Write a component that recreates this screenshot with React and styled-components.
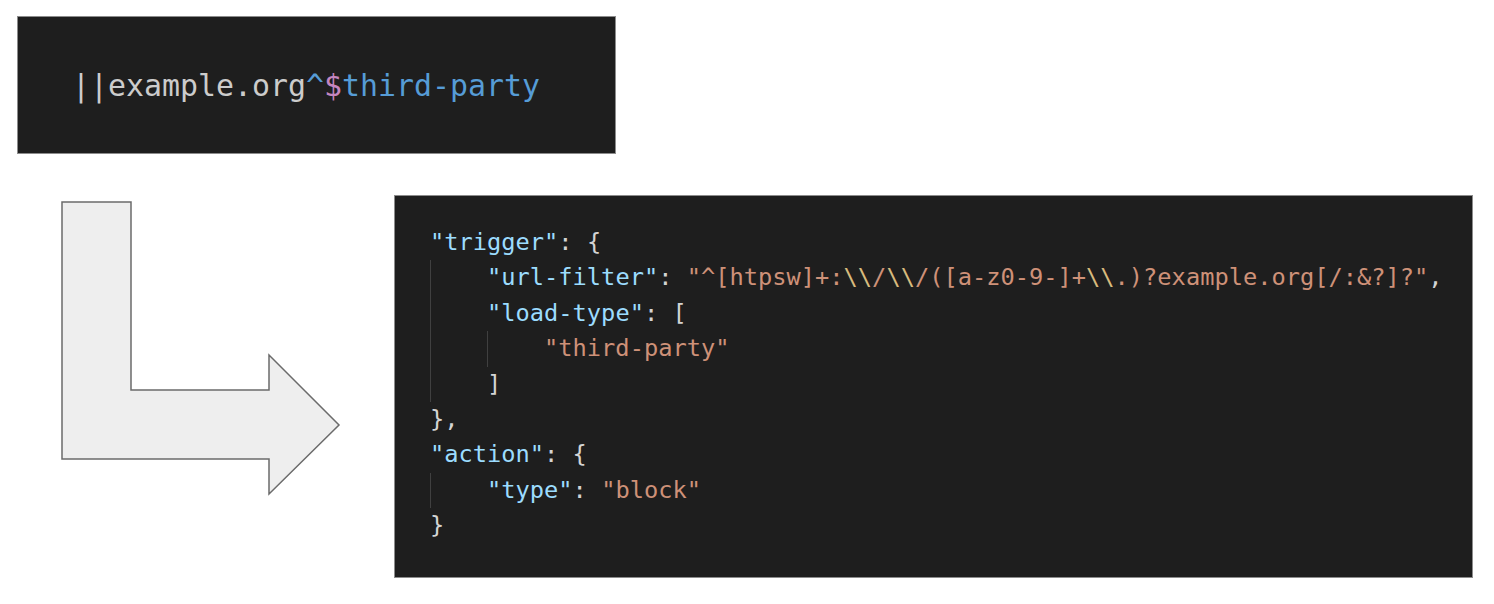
import React from 'react'
import styled, { createGlobalStyle } from 'styled-components'

// Styles ==================================
const Global = createGlobalStyle`
  html, body {
    margin: 0;
    padding: 0;
    background: #fff;
  }
`

const Page = styled.div`
  width: 1494px;
  height: 604px;
  padding: 16px 0 0 17px;
  box-sizing: border-box;
  display: flex;
  flex-direction: column;
`

const Rule = styled.div`
  width: 599px;
  height: 138px;
  box-sizing: border-box;
  background: #1e1e1e;
  border: 1px solid #8c8c8c;
  display: flex;
  align-items: center;
  padding-left: 54px;
  font-family: "DejaVu Sans Mono", monospace;
  font-size: 29.9px;
  color: #cccccc;
  white-space: pre;
`

const Lower = styled.div`
  display: flex;
  align-items: flex-start;
  margin-top: 41px;
  margin-left: 38px;
`

const Arrow = styled.svg`
  margin-top: 5px;
  flex: none;
`

const Code = styled.div`
  width: 1079px;
  height: 383px;
  box-sizing: border-box;
  margin-left: 49px;
  background: #1e1e1e;
  border: 1px solid #8c8c8c;
  padding: 29px 0 0 35px;
  font-family: "DejaVu Sans Mono", monospace;
  font-size: 23.7px;
  line-height: 35.4px;
  color: #d4d4d4;
  white-space: pre;
`

const Line = styled.div`
  display: flex;
  height: 35.4px;
`

const Indent = styled.span`
  display: inline-block;
  width: 4ch;
  height: 35.4px;
  box-shadow: inset 1px 0 0 #404040;
`

const Tok = styled.span`
  color: ${p => p.c};
`

// =========================================
const KEY = '#9cdcfe'
const STR = '#ce9178'
const ESC = '#d7ba7d'
const PUN = '#d4d4d4'

const k = t => [KEY, t]
const s = t => [STR, t]
const e = t => [ESC, t]
const p = t => [PUN, t]

const lines = [
  [0, [k('"trigger"'), p(': {')]],
  [1, [k('"url-filter"'), p(': '), s('"^[htpsw]+:'), e('\\\\'), s('/'), e('\\\\'), s('/([a-z0-9-]+'), e('\\\\'), s('.)?example.org[/:&?]?"'), p(',')]],
  [1, [k('"load-type"'), p(': [')]],
  [2, [s('"third-party"')]],
  [1, [p(']')]],
  [0, [p('},')]],
  [0, [k('"action"'), p(': {')]],
  [1, [k('"type"'), p(': '), s('"block"')]],
  [0, [p('}')]]
]

const App = () =>
  <Page>
    <Global />
    <Rule>
      <Tok c="#cccccc">||example.org</Tok>
      <Tok c="#569cd6">^</Tok>
      <Tok c="#c586c0">$</Tok>
      <Tok c="#569cd6">third-party</Tok>
    </Rule>
    <Lower>
      <Arrow width="290" height="300" viewBox="0 0 290 300">
        <polygon
          points="7,2 76,2 76,190 214,190 214,155 284,225 214,294 214,259 7,259"
          fill="#eeeeee"
          stroke="#6b6b6b"
          strokeWidth="1.5" />
      </Arrow>
      <Code>
        {lines.map(([depth, toks], i) =>
          <Line key={i}>
            {Array.from({ length: depth }).map((_, j) => <Indent key={j} />)}
            {toks.map(([c, t], j) => <Tok key={j} c={c}>{t}</Tok>)}
          </Line>
        )}
      </Code>
    </Lower>
  </Page>

export default App
